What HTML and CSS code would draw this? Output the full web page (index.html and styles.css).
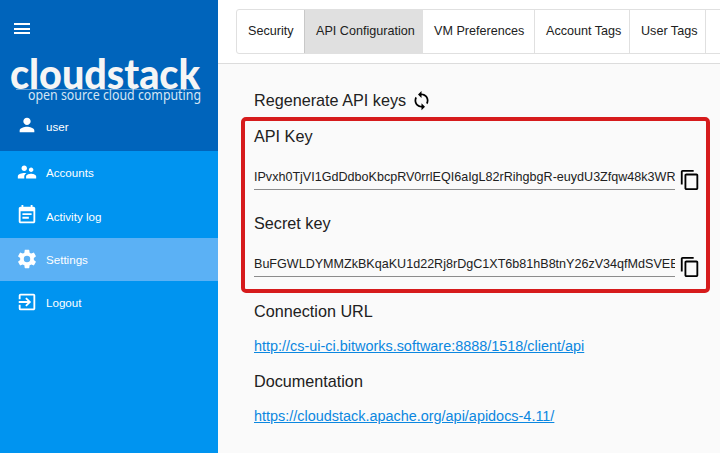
FILE: index.html
```html
<!DOCTYPE html>
<html lang="en">
<head>
<meta charset="utf-8">
<title>CloudStack</title>
<link rel="stylesheet" href="styles.css">
</head>
<body>
<aside class="sidebar">
  <header class="brand">
    <svg class="icon menu" viewBox="0 0 22 22"><path d="M3 6h16v2H3zM3 11h16v2H3zM3 15h16v2H3z"/></svg>
    <svg class="logo" viewBox="0 0 218 56">
      <text class="logo-name" x="10" y="38.5" textLength="190" lengthAdjust="spacingAndGlyphs">cloudstack</text>
      <path class="logo-line" d="M16 39.5H200"/>
      <text class="logo-tag" x="28" y="50" textLength="173" lengthAdjust="spacingAndGlyphs">open source cloud computing</text>
    </svg>
    <div class="user"><svg class="icon" viewBox="0 0 24 24"><path d="M12 12c2.21 0 4-1.79 4-4s-1.79-4-4-4-4 1.79-4 4 1.79 4 4 4zm0 2c-2.67 0-8 1.34-8 4v2h16v-2c0-2.66-5.33-4-8-4z"/></svg><span>user</span></div>
  </header>
  <nav>
    <a class="item"><svg class="icon" viewBox="0 0 24 24"><path d="M16.5 12c1.38 0 2.49-1.12 2.49-2.5S17.88 7 16.5 7 14 8.12 14 9.500s1.12 2.500 2.500 2.500zM9 11c1.660 0 2.990-1.340 2.990-3S10.660 5 9 5 6 6.340 6 8s1.340 3 3 3zm7.500 3c-1.830 0-5.500.920-5.500 2.750V19h11v-2.250c0-1.830-3.670-2.750-5.500-2.750zM9 13c-2.330 0-7 1.170-7 3.500V19h7v-2.250c0-.850.330-2.340 2.370-3.470C10.500 13.100 9.660 13 9 13z"/></svg><span>Accounts</span></a>
    <a class="item"><svg class="icon" viewBox="0 0 24 24"><path d="M17 10H7v2h10v-2zm2-7h-1V1h-2v2H8V1H6v2H5c-1.110 0-1.990.900-1.990 2L3 19c0 1.100.890 2 2 2h14c1.100 0 2-.900 2-2V5c0-1.100-.900-2-2-2zm0 16H5V8h14v11zm-5-5H7v2h7v-2z"/></svg><span>Activity log</span></a>
    <a class="item active"><svg class="icon" viewBox="0 0 24 24"><path d="M12 15.500A3.500 3.500 0 0 1 8.500 12 3.500 3.500 0 0 1 12 8.500a3.500 3.500 0 0 1 3.500 3.500 3.500 3.500 0 0 1-3.500 3.500m7.430-2.530c.040-.320.070-.640.070-.970s-.030-.660-.070-1l2.110-1.630c.190-.150.240-.420.120-.640l-2-3.460c-.120-.220-.390-.310-.610-.220l-2.490 1c-.520-.390-1.060-.730-1.690-.980l-.370-2.650A.506.506 0 0 0 14 2h-4c-.250 0-.460.180-.500.420l-.370 2.650c-.630.250-1.170.590-1.690.980l-2.490-1c-.220-.090-.490 0-.610.220l-2 3.460c-.130.220-.070.490.120.640L4.570 11c-.040.340-.070.670-.070 1s.030.650.070.970l-2.110 1.660c-.190.150-.250.420-.120.640l2 3.460c.120.220.390.300.610.220l2.490-1.010c.520.400 1.060.740 1.690.990l.370 2.650c.040.240.250.420.500.420h4c.250 0 .460-.180.500-.420l.370-2.650c.630-.260 1.170-.590 1.690-.990l2.490 1.010c.220.080.490 0 .610-.220l2-3.460c.120-.220.070-.490-.120-.640z"/></svg><span>Settings</span></a>
    <a class="item"><svg class="icon" viewBox="0 0 24 24"><path d="M10.090 15.590L11.500 17l5-5-5-5-1.410 1.410L12.670 11H3v2h9.670l-2.580 2.590zM19 3H5a2 2 0 0 0-2 2v4h2V5h14v14H5v-4H3v4a2 2 0 0 0 2 2h14c1.100 0 2-.900 2-2V5c0-1.100-.900-2-2-2z"/></svg><span>Logout</span></a>
  </nav>
</aside>
<main class="main">
  <div class="toolbar">
    <div class="tabs">
      <a class="tab security">Security</a>
      <a class="tab api selected">API Configuration</a>
      <a class="tab vm">VM Preferences</a>
      <a class="tab account">Account Tags</a>
      <a class="tab tags">User Tags</a>
    </div>
  </div>
  <section class="content">
    <div class="regenerate"><h2>Regenerate API keys</h2><svg class="sync" viewBox="0 0 24 24"><path d="M12 4V1L8 5l4 4V6c3.310 0 6 2.690 6 6 0 1.010-.250 1.970-.700 2.800l1.460 1.460A7.930 7.930 0 0 0 20 12c0-4.420-3.580-8-8-8zm0 14c-3.310 0-6-2.690-6-6 0-1.010.250-1.970.700-2.800L5.240 7.740A7.930 7.930 0 0 0 4 12c0 4.420 3.580 8 8 8v3l4-4-4-4v3z"/></svg></div>
    <div class="keys">
      <h2>API Key</h2>
      <div class="field"><div class="value">IPvxh0TjVI1GdDdboKbcpRV0rrlEQI6aIgL82rRihgbgR-euydU3Zfqw48k3WR</div><svg class="copy" viewBox="0 0 24 24"><path d="M16 1H4c-1.100 0-2 .900-2 2v14h2V3h12V1zm3 4H8c-1.100 0-2 .900-2 2v14c0 1.100.900 2 2 2h11c1.100 0 2-.900 2-2V7c0-1.100-.900-2-2-2zm0 16H8V7h11v14z"/></svg></div>
      <h2>Secret key</h2>
      <div class="field"><div class="value">BuFGWLDYMMZkBKqaKU1d22Rj8rDgC1XT6b81hB8tnY26zV34qfMdSVEE</div><svg class="copy" viewBox="0 0 24 24"><path d="M16 1H4c-1.100 0-2 .900-2 2v14h2V3h12V1zm3 4H8c-1.100 0-2 .900-2 2v14c0 1.100.900 2 2 2h11c1.100 0 2-.900 2-2V7c0-1.100-.900-2-2-2zm0 16H8V7h11v14z"/></svg></div>
    </div>
    <div class="links">
      <h2>Connection URL</h2>
      <p><a class="link">http://cs-ui-ci.bitworks.software:8888/1518/client/api</a></p>
      <h2>Documentation</h2>
      <p><a class="link">https://cloudstack.apache.org/api/apidocs-4.11/</a></p>
    </div>
  </section>
</main>
</body>
</html>
```
FILE: styles.css
```css
* { box-sizing: border-box; }
body {
  margin: 0;
  display: flex;
  width: 720px;
  height: 453px;
  overflow: hidden;
  font-family: "Liberation Sans", Arial, sans-serif;
  color: #212121;
  background: #fafafa;
}
.sidebar { flex: 0 0 218px; background: #0094f0; color: #fff; }
.brand { height: 151px; background: #0064bb; padding-top: 17px; }
.icon { display: block; width: 22px; height: 22px; fill: #fff; }
.menu { margin-left: 11px; }
.logo { display: block; width: 218px; height: 56px; margin-top: 11px; overflow: visible; }
.logo-name { font: 900 41px Lato, sans-serif; fill: #f5f5f5; }
.logo-tag { font: 400 13.5px "Noto Sans", sans-serif; fill: #d5e5f4; }
.logo-line { stroke: #5f9ed6; stroke-width: 1; }
.user, .item {
  display: flex;
  align-items: center;
  gap: 8.5px;
  padding-left: 15.5px;
  font-size: 11.6px;
}
.user { margin-top: 8px; height: 22px; }
.item { height: 43.33px; }
.item .icon { margin-top: -1px; }
.user span { padding-top: 3px; }
.item span { padding-top: 0.4px; }
.active { background: #5bb1f5; }
.main { flex: 1; min-width: 0; overflow: hidden; }
.toolbar { height: 64px; padding: 9px 0 0 18px; background: #fff; border-bottom: 1px solid #dcdcdc; }
.tabs {
  display: flex;
  width: 560px;
  height: 45px;
  border: 1px solid #e0e0e0;
  border-radius: 3px;
}
.tab {
  display: flex;
  align-items: center;
  padding: 0 0 2px 11px;
  border-right: 1px solid #e0e0e0;
  font-size: 12.6px;
  white-space: nowrap;
}
.security { width: 67px; border-right: 0; }
.api { width: 119px; }
.vm { width: 112px; }
.account { width: 95px; }
.tags { width: 76px; }
.selected { background: #e0e0e0; border-left: 1px solid #c8c8c8; }
.content { padding: 25px 0 0 23px; }
h2 { margin: 0; height: 24px; font-size: 16.2px; line-height: 22px; font-weight: 400; }
.regenerate { display: flex; align-items: center; padding-left: 13px; height: 24px; }
.sync { width: 21px; height: 21px; margin: -2px 0 0 5px; }
.keys {
  width: 469px;
  height: 176px;
  margin-top: 4px;
  padding: 4px 5px 0 9px;
  border: 4px solid #d61b1c;
  border-radius: 5px;
}
.field { display: flex; height: 63px; padding-top: 18px; }
.value {
  width: 421px;
  height: 23px;
  overflow: hidden;
  border-bottom: 1px solid #8c8c8c;
  font-size: 12.57px;
  line-height: 21px;
  white-space: nowrap;
}
.copy { width: 22px; height: 22px; margin: 2px 0 0 3.6px; }
.links { padding: 7px 0 0 13px; }
.links p { margin: 0; height: 46px; padding-top: 11px; font-size: 14.43px; line-height: 22px; }
.link { color: #0b87e0; text-decoration: underline; }
```
